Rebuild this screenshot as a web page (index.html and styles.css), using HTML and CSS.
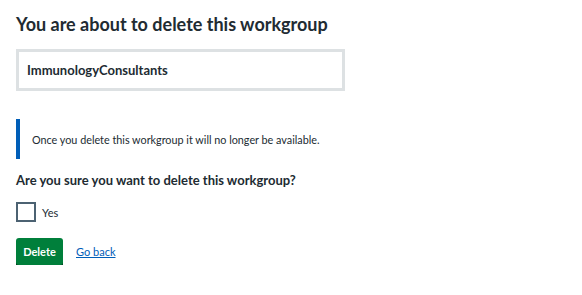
FILE: index.html
```html
<!DOCTYPE html>
<html lang="en">
<head>
<meta charset="utf-8">
<title>Delete workgroup</title>
<link rel="stylesheet" href="styles.css">
</head>
<body>
<main class="page">
  <h1 class="title">You are about to delete this workgroup</h1>
  <div class="summary"><span class="summary-name">ImmunologyConsultants</span></div>
  <div class="inset"><p>Once you delete this workgroup it will no longer be available.</p></div>
  <fieldset class="fieldset">
    <legend class="legend">Are you sure you want to delete this workgroup?</legend>
    <label class="check">
      <input type="checkbox" class="check-input">
      <span class="check-box"></span>
      <span class="check-label">Yes</span>
    </label>
  </fieldset>
  <div class="actions">
    <button class="button" type="button">Delete</button>
    <a class="link" href="#">Go back</a>
  </div>
</main>
</body>
</html>
```

FILE: styles.css
```css
* { box-sizing: border-box; }
html, body { margin: 0; padding: 0; background: #fff; }
body {
  font-family: Lato, "Open Sans", Arial, sans-serif;
  color: #212b32;
}
.page {
  padding: 11px 16px 0 16px;
  display: flex;
  flex-direction: column;
  align-items: flex-start;
}
.title {
  margin: 0;
  font-size: 18px;
  line-height: 26px;
  font-weight: 700;
}
.summary {
  margin-top: 12px;
  width: 329px;
  height: 42px;
  border: 3px solid #dde1e3;
  display: flex;
  align-items: center;
  padding-left: 8px;
}
.summary-name {
  font-size: 13px;
  font-weight: 700;
}
.inset {
  margin-top: 28px;
  border-left: 4px solid #005eb8;
  height: 40px;
  display: flex;
  align-items: center;
  padding-left: 12px;
}
.inset p {
  margin: 0;
  font-size: 10.8px;
}
.fieldset {
  border: 0;
  margin: 11px 0 0 0;
  padding: 0;
}
.legend {
  padding: 0;
  font-size: 13px;
  font-weight: 700;
  line-height: 20px;
}
.check {
  margin-top: 12px;
  display: flex;
  align-items: center;
  position: relative;
}
.check-input {
  position: absolute;
  opacity: 0;
  width: 20px;
  height: 20px;
  margin: 0;
}
.check-box {
  width: 20px;
  height: 20px;
  border: 2px solid #4c6272;
  background: #fff;
}
.check-label {
  margin-left: 6px;
  font-size: 11px;
}
.actions {
  margin-top: 16px;
  display: flex;
  align-items: center;
  gap: 13px;
}
.button {
  font-family: inherit;
  font-size: 11px;
  font-weight: 700;
  color: #fff;
  background: #007f3b;
  border: 0;
  border-radius: 3px;
  box-shadow: 0 3px 0 #00401e;
  width: 47px;
  height: 27px;
  padding: 0;
}
.link {
  color: #005eb8;
  font-size: 11px;
  text-decoration: underline;
}
```
